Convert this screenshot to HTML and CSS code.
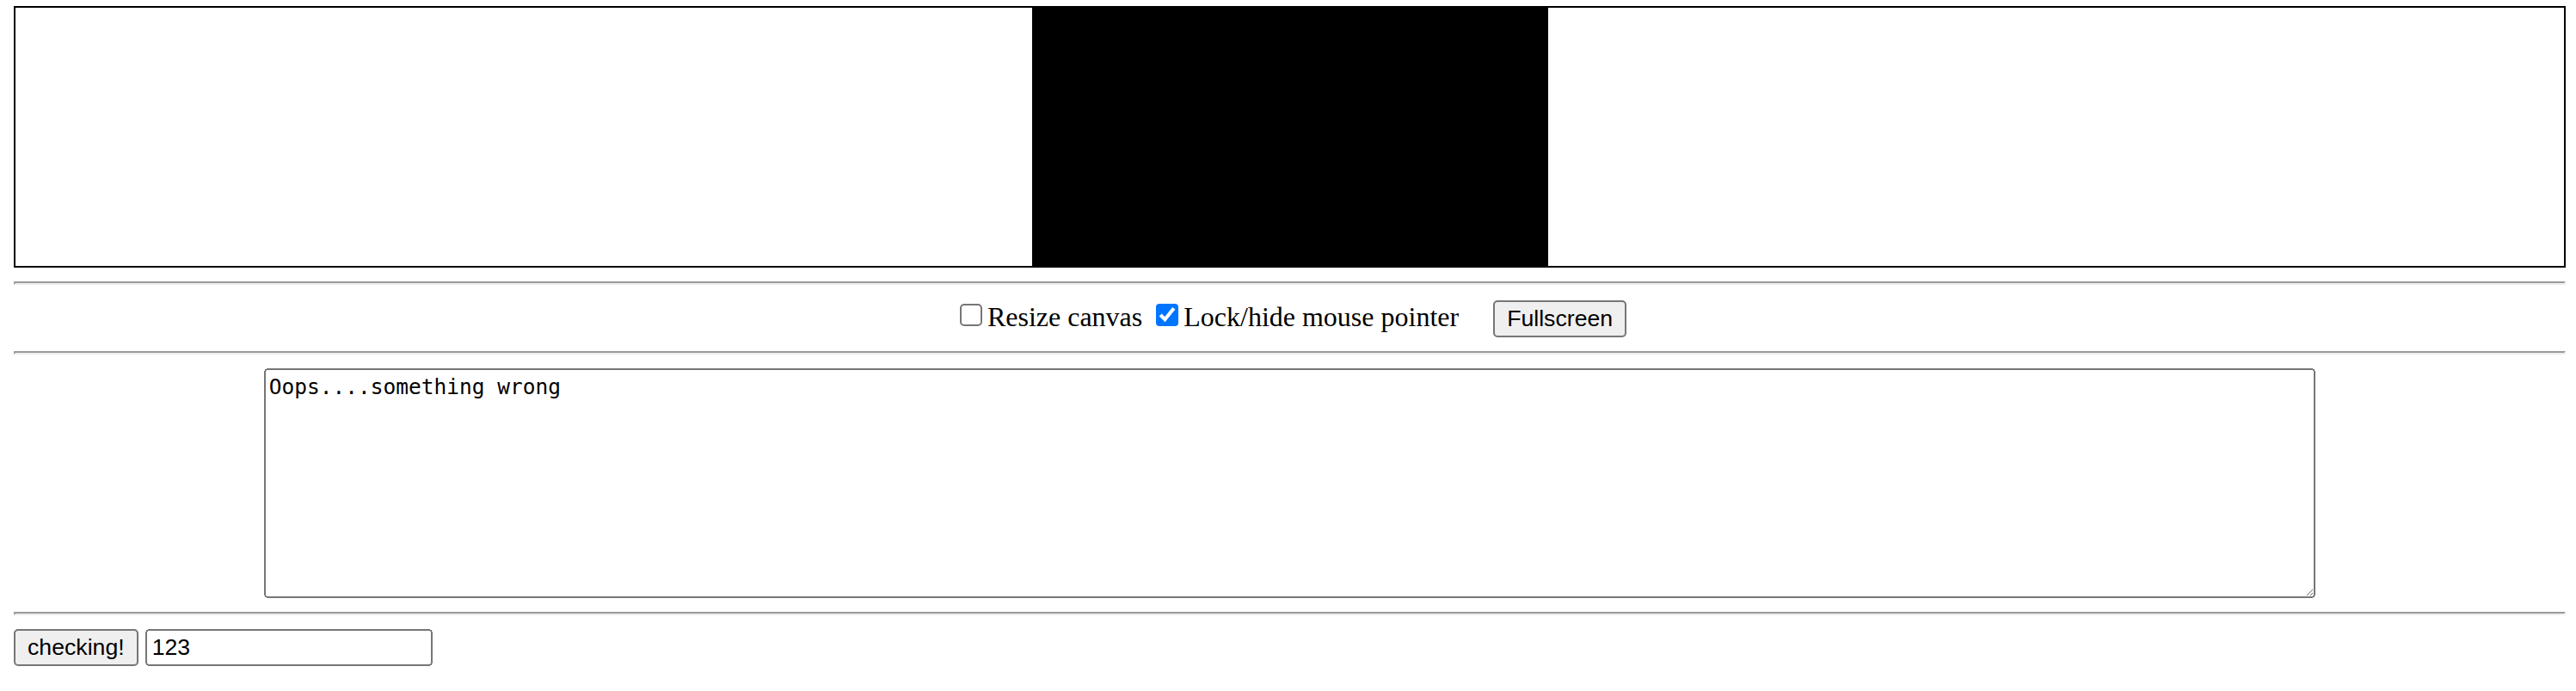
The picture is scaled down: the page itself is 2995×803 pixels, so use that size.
FILE: index.html
```html
<!doctype html>
<html lang="en-us" class="page">
<head>
<meta charset="utf-8">
<title>Emscripten-Generated Code</title>
<link rel="stylesheet" href="styles.css">
</head>
<body class="page-body">
  <div class="emscripten_border">
    <canvas class="emscripten canvas" id="canvas" tabindex="-1"></canvas>
  </div>
  <hr class="rule">
  <div class="emscripten controls">
    <input type="checkbox" class="check" id="resize">Resize canvas
    <input type="checkbox" class="check" id="pointerLock" checked>Lock/hide mouse pointer
    &nbsp;&nbsp;&nbsp;
    <input type="button" class="btn" value="Fullscreen">
  </div>
  <hr class="rule">
  <textarea class="emscripten output" id="output" rows="8">Oops....something wrong</textarea>
  <hr class="rule">
  <div class="bottom-row">
    <button class="btn" type="button">checking!</button>
    <input type="text" class="field" value="123">
  </div>
</body>
</html>
```

FILE: styles.css
```css
.page {
  zoom: 2;
  background: #ffffff;
}

.page-body {
  margin: 3.5px 6px 8px 8px;
  font-family: "Liberation Serif", "Times New Roman", serif;
  font-size: 16px;
  color: #000000;
}

.emscripten {
  padding-right: 0;
  margin-left: auto;
  margin-right: auto;
  display: block;
}

div.emscripten {
  text-align: center;
}

.emscripten_border {
  border: 1px solid black;
}

canvas.emscripten {
  border: 0 none;
  background-color: black;
  width: 300px;
  height: 150px;
}

.check {
  margin: 3px 3px 3px 4px;
}

.btn {
  font-family: "Liberation Sans", Arial, sans-serif;
  font-size: 13.333px;
}

textarea.output {
  font-family: "DejaVu Sans Mono", "Liberation Mono", monospace;
  font-size: 12.25px;
  line-height: 15.9px;
  width: 80%;
  height: 127.5px;
  padding: 2px;
  margin-top: 0;
  margin-bottom: 0;
}

.bottom-row {
  display: block;
}

.field {
  font-family: "Liberation Sans", Arial, sans-serif;
  font-size: 13.333px;
  box-sizing: border-box;
  width: 167px;
}
```
